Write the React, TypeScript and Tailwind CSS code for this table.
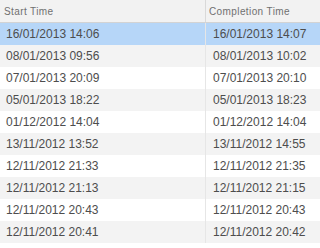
const rows = [
  ['16/01/2013 14:06', '16/01/2013 14:07'],
  ['08/01/2013 09:56', '08/01/2013 10:02'],
  ['07/01/2013 20:09', '07/01/2013 20:10'],
  ['05/01/2013 18:22', '05/01/2013 18:23'],
  ['01/12/2012 14:04', '01/12/2012 14:04'],
  ['13/11/2012 13:52', '13/11/2012 14:55'],
  ['12/11/2012 21:33', '12/11/2012 21:35'],
  ['12/11/2012 21:13', '12/11/2012 21:15'],
  ['12/11/2012 20:43', '12/11/2012 20:43'],
  ['12/11/2012 20:41', '12/11/2012 20:42'],
];

export default function App() {
  return (
    <div className="w-[320px] h-[248px] overflow-hidden bg-white font-['Liberation_Sans',Arial,sans-serif]">
      {/* header */}
      <div className="flex h-[23px] bg-[#f2f2f2] border-b border-[#d3d3d3] text-[10px] tracking-[0.4px] text-[#707070]">
        <div className="w-[206px] border-r border-[#d9d9d9] pl-[4px] flex items-center">Start Time</div>
        <div className="flex-1 pl-[3px] flex items-center">Completion Time</div>
      </div>
      {rows.map(([start, end], i) => (
        <div
          key={i}
          className={
            'flex h-[22px] text-[12px] text-[#4d4d4d] ' +
            (i === 0 ? 'bg-[#b6d6f8]' : i % 2 === 1 ? 'bg-[#f3f3f3]' : 'bg-white')
          }
        >
          <div className="w-[206px] border-r border-[#e6e6e6] pl-[6px] flex items-center">{start}</div>
          <div className="flex-1 pl-[7px] flex items-center">{end}</div>
        </div>
      ))}
    </div>
  );
}
